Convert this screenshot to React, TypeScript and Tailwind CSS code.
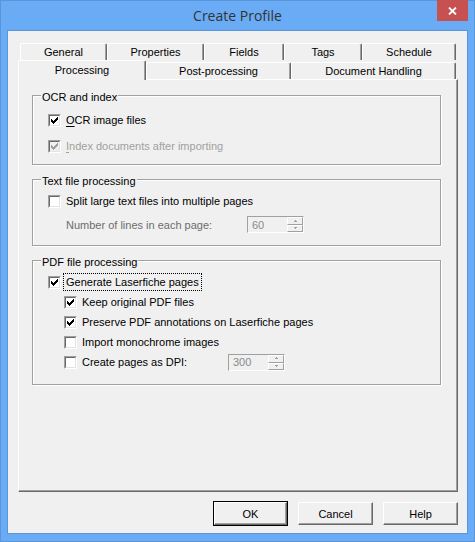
import React from "react";

function Check({ checked, disabled }: { checked?: boolean; disabled?: boolean }) {
  const fill = disabled ? "#a0a0a0" : "#000";
  return (
    <div className="w-[13px] h-[13px] shrink-0 flex border border-t-[#a0a0a0] border-l-[#a0a0a0] border-b-white border-r-white">
      <div
        className={`flex-1 flex items-center justify-center border border-t-[#696969] border-l-[#696969] border-b-[#e3e3e3] border-r-[#e3e3e3] ${
          disabled ? "bg-[#f0f0f0]" : "bg-white"
        }`}
      >
        {checked && (
          <svg width="7" height="7" viewBox="0 0 7 7" shapeRendering="crispEdges">
            <rect x="0" y="2" width="1" height="3" fill={fill} />
            <rect x="1" y="3" width="1" height="3" fill={fill} />
            <rect x="2" y="4" width="1" height="3" fill={fill} />
            <rect x="3" y="3" width="1" height="3" fill={fill} />
            <rect x="4" y="2" width="1" height="3" fill={fill} />
            <rect x="5" y="1" width="1" height="3" fill={fill} />
            <rect x="6" y="0" width="1" height="3" fill={fill} />
          </svg>
        )}
      </div>
    </div>
  );
}

function Spin({ value }: { value: string }) {
  return (
    <div className="h-[17px] w-[57px] shrink-0 flex border border-t-[#a0a0a0] border-l-[#a0a0a0] border-b-white border-r-white">
      <div className="flex-1 flex items-center pl-[4px] text-[#8a8a8a] bg-[#f0f0f0] leading-[14px]">{value}</div>
      <div className="w-[16px] flex flex-col">
        <div className="h-[8px] flex items-center justify-center border border-t-white border-l-white border-b-[#a0a0a0] border-r-[#a0a0a0] bg-[#f0f0f0]">
          <svg width="5" height="3" viewBox="0 0 5 3" shapeRendering="crispEdges">
            <rect x="2" y="0" width="1" height="1" fill="#a0a0a0" />
            <rect x="1" y="1" width="3" height="1" fill="#a0a0a0" />
          </svg>
        </div>
        <div className="h-[7px] flex items-center justify-center border border-t-white border-l-white border-b-[#a0a0a0] border-r-[#a0a0a0] bg-[#f0f0f0]">
          <svg width="5" height="3" viewBox="0 0 5 3" shapeRendering="crispEdges">
            <rect x="1" y="0" width="3" height="1" fill="#a0a0a0" />
            <rect x="2" y="1" width="1" height="1" fill="#a0a0a0" />
          </svg>
        </div>
      </div>
    </div>
  );
}

function Tab({ label, className, selected }: { label: string; className: string; selected?: boolean }) {
  return (
    <div
      className={`flex justify-center bg-[#f0f0f0] border-t border-l border-r border-t-white border-l-white border-r-[#696969] shadow-[inset_-1px_0_0_#a0a0a0] rounded-t-[2px] ${
        selected ? "items-start pt-[2px]" : "items-center"
      } ${className}`}
    >
      {label}
    </div>
  );
}

function Group({ title, className, children }: { title: string; className: string; children: React.ReactNode }) {
  return (
    <div className={`relative w-[409px] flex flex-col border border-[#a0a0a0] shadow-[1px_1px_0_#fff,inset_1px_1px_0_#fff] ${className}`}>
      <div className="absolute top-[-6px] left-[8px] px-[1px] bg-[#f0f0f0] leading-[14px]">{title}</div>
      {children}
    </div>
  );
}

function Row({ className, children }: { className: string; children: React.ReactNode }) {
  return <div className={`h-[20px] flex items-center ${className}`}>{children}</div>;
}

function Button({ label, def }: { label: string; def?: boolean }) {
  const inner = (
    <div className="w-full h-full flex items-center justify-center border border-t-white border-l-white border-b-[#696969] border-r-[#696969] shadow-[inset_-1px_-1px_0_#a0a0a0] bg-[#f0f0f0]">
      {label}
    </div>
  );
  if (def) {
    return <div className="w-[75px] h-[25px] border border-black flex">{inner}</div>;
  }
  return <div className="w-[75px] h-[23px] flex">{inner}</div>;
}

export default function App() {
  return (
    <div className="relative w-[475px] h-[542px] border border-[#5a95da] bg-[#6aabf5] flex flex-col font-['Liberation_Sans',Arial,sans-serif] text-[11px] text-black leading-[14px]">
      <div className="h-[29px] shrink-0 flex items-center justify-center font-['Open_Sans',sans-serif] text-[14px] text-[#333333]">
        Create Profile
      </div>
      <div className="absolute top-[-1px] right-[6px] w-[31px] h-[21px] bg-[#c75050] flex items-center justify-center">
        <svg width="9" height="8" viewBox="0 0 9 8">
          <path d="M1 0.5 L8 7.5 M8 0.5 L1 7.5" stroke="#fff" strokeWidth="1.8" />
        </svg>
      </div>

      <div className="flex-1 mx-[6px] mb-[7px] border border-[#5a95da] bg-[#f0f0f0] flex flex-col pt-[12px] pl-[10px] pr-[9px]">
        <div className="flex ml-[2px] h-[17px]">
          <Tab label="General" className="w-[87px]" />
          <Tab label="Properties" className="w-[97px]" />
          <Tab label="Fields" className="w-[80px]" />
          <Tab label="Tags" className="w-[78px]" />
          <Tab label="Schedule" className="w-[94px]" />
        </div>
        <div className="flex items-end h-[19px]">
          <Tab label="Processing" className="w-[128px] h-[20px] -mb-[1px] relative z-10" selected />
          <Tab label="Post-processing" className="w-[145px] h-[17px]" />
          <Tab label="Document Handling" className="w-[165px] h-[17px]" />
        </div>

        <div className="w-[440px] h-[413px] shrink-0 border border-t-white border-l-white border-b-[#696969] border-r-[#696969] shadow-[inset_-1px_-1px_0_#a0a0a0] flex flex-col pl-[13px] pt-[15px]">
          <Group title="OCR and index" className="pb-[8px]">
            <Row className="mt-[14px] pl-[15px]">
              <Check checked />
              <span className="ml-[5px]">
                <span className="underline underline-offset-[2px]">O</span>CR image files
              </span>
            </Row>
            <Row className="mt-[6px] pl-[15px]">
              <Check checked disabled />
              <span className="ml-[5px] text-[#a0a0a0]">
                <span className="underline underline-offset-[2px]">I</span>ndex documents after importing
              </span>
            </Row>
          </Group>

          <Group title="Text file processing" className="mt-[14px] pb-[12px]">
            <Row className="mt-[11px] pl-[15px]">
              <Check />
              <span className="ml-[5px]">Split large text files into multiple pages</span>
            </Row>
            <div className="mt-[5px] h-[17px] flex items-center pl-[33px]">
              <span className="w-[181px] text-[#6d6d6d]">Number of lines in each page:</span>
              <Spin value="60" />
            </div>
          </Group>

          <Group title="PDF file processing" className="mt-[14px] pb-[12px]">
            <Row className="mt-[11px] pl-[15px]">
              <Check checked />
              <span className="ml-[2px] px-[2px] py-[1px] border border-dotted border-black">Generate Laserfiche pages</span>
            </Row>
            <Row className="pl-[31px]">
              <Check checked />
              <span className="ml-[5px]">Keep original PDF files</span>
            </Row>
            <Row className="pl-[31px]">
              <Check checked />
              <span className="ml-[5px]">Preserve PDF annotations on Laserfiche pages</span>
            </Row>
            <Row className="pl-[31px]">
              <Check />
              <span className="ml-[5px]">Import monochrome images</span>
            </Row>
            <Row className="pl-[31px]">
              <Check />
              <span className="ml-[5px] w-[146px]">Create pages as DPI:</span>
              <Spin value="300" />
            </Row>
          </Group>
        </div>

        <div className="mt-[9px] h-[25px] flex items-center justify-end gap-[10px] pr-[0px]">
          <Button label="OK" def />
          <Button label="Cancel" />
          <Button label="Help" />
        </div>
      </div>
    </div>
  );
}
